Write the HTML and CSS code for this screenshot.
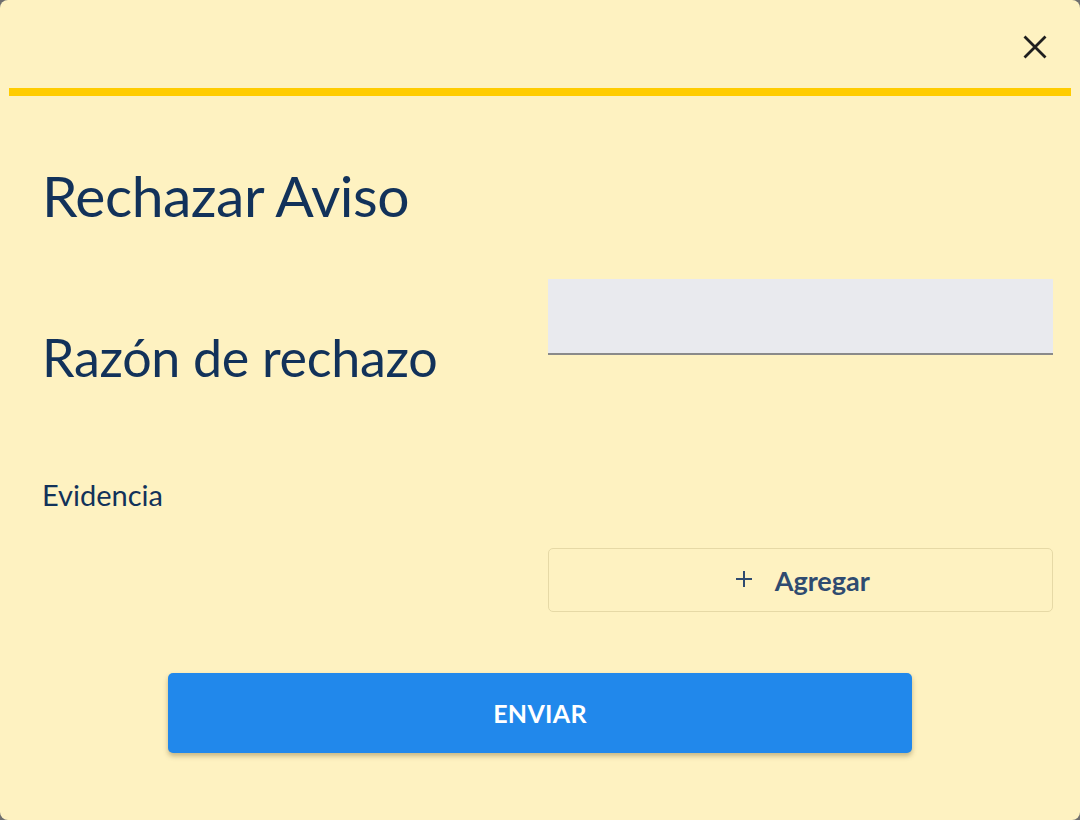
FILE: index.html
```html
<!DOCTYPE html>
<html lang="es">
<head>
<meta charset="utf-8">
<title>Rechazar Aviso</title>
<link rel="stylesheet" href="styles.css">
</head>
<body>
<div class="dialog">
  <div class="header">
    <button class="close" aria-label="Cerrar">
      <svg width="24" height="24" viewBox="0 0 24 24"><path d="M1.5 1.5 L22.5 22.5 M22.5 1.5 L1.5 22.5" stroke="#1f1f1f" stroke-width="2.8" stroke-linecap="butt" fill="none"/></svg>
    </button>
  </div>
  <div class="bar"></div>
  <div class="content">
    <h1 class="title">Rechazar Aviso</h1>
    <div class="row reason-row">
      <h2 class="reason">Razón de rechazo</h2>
      <div class="field"></div>
    </div>
    <div class="row evidence-row">
      <div class="evidence">Evidencia</div>
      <div class="evidence-side">
        <button class="add">
          <svg class="plus" width="18" height="18" viewBox="0 0 18 18"><path d="M9 1 V17 M1 9 H17" stroke="#2f4b70" stroke-width="2" fill="none"/></svg>
          <span>Agregar</span>
        </button>
      </div>
    </div>
  </div>
  <div class="actions">
    <button class="send">ENVIAR</button>
  </div>
</div>
</body>
</html>
```
FILE: styles.css
```css
html, body {
  margin: 0;
  padding: 0;
}
body {
  background: #6f6f6f;
  font-family: "Lato", "Noto Sans", sans-serif;
  color: #12325a;
}
.dialog {
  width: 1080px;
  height: 820px;
  box-sizing: border-box;
  background: #fef2c1;
  border-radius: 8px;
  padding: 0 9px;
  overflow: hidden;
}
.header {
  height: 88px;
  display: flex;
  justify-content: flex-end;
  align-items: flex-start;
}
.close {
  margin: 35px 24px 0 0;
  padding: 0;
  border: 0;
  background: transparent;
  width: 24px;
  height: 24px;
  display: block;
}
.close svg { display: block; }
.bar {
  height: 8px;
  background: #ffcc00;
}
.content {
  padding: 0 18px 0 33px;
}
.title {
  margin: 68px 0 0;
  font-weight: 400;
  font-size: 57px;
  line-height: 62px;
  letter-spacing: -0.5px;
}
.row {
  display: grid;
  grid-template-columns: 1fr 1fr;
}
.reason-row {
  margin-top: 53px;
}
.reason {
  margin: 50px 0 0;
  font-weight: 400;
  font-size: 52px;
  line-height: 56px;
  letter-spacing: -0.3px;
}
.field {
  height: 74px;
  background: #e9eaee;
  border-bottom: 2px solid #8a8a8a;
}
.evidence-row {
  margin-top: 94px;
}
.evidence {
  font-size: 29px;
  line-height: 32px;
}
.evidence-side {
  padding-top: 69px;
}
.add {
  width: 100%;
  height: 64px;
  box-sizing: border-box;
  border: 1px solid #e6d9a6;
  border-radius: 5px;
  background: transparent;
  display: flex;
  align-items: center;
  justify-content: center;
  gap: 22px;
  font-family: "Lato", "Noto Sans", sans-serif;
  font-weight: 700;
  font-size: 27px;
  color: #2f4b70;
  padding: 0 0 0 4px;
}
.plus {
  display: block;
  margin-top: -2px;
}
.actions {
  display: flex;
  justify-content: center;
  margin-top: 61px;
}
.send {
  width: 744px;
  height: 80px;
  border: 0;
  border-radius: 5px;
  background: #2188eb;
  color: #ffffff;
  font-family: "Lato", "Noto Sans", sans-serif;
  font-weight: 700;
  font-size: 25px;
  letter-spacing: 0.3px;
  box-shadow: 0 3px 5px rgba(90, 70, 20, 0.35);
}
```
